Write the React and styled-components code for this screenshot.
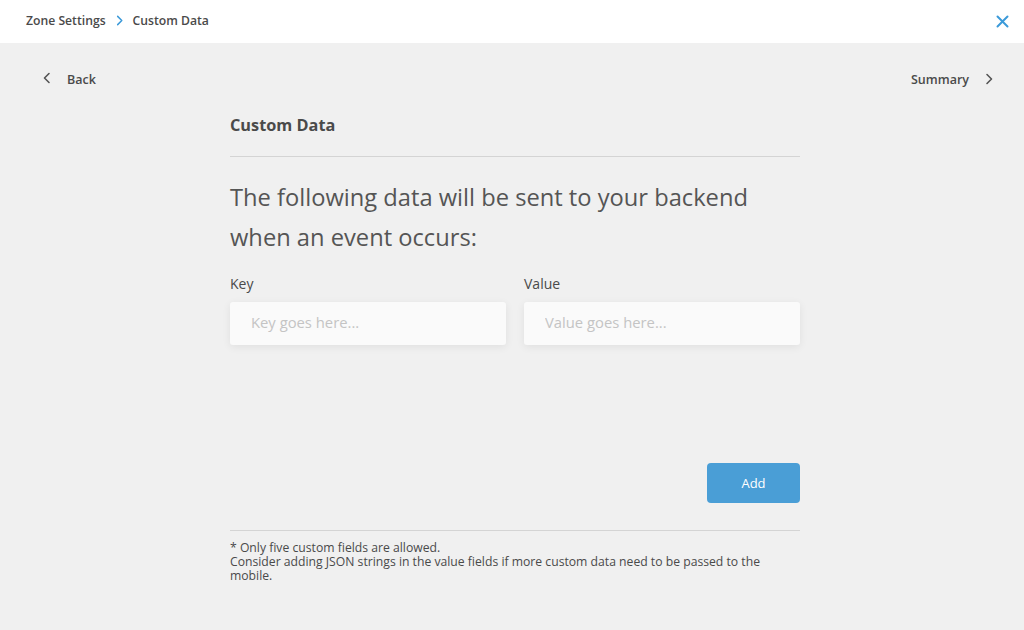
import styled, { createGlobalStyle } from "styled-components";

const GlobalStyle = createGlobalStyle`
  html, body {
    margin: 0;
    padding: 0;
    background: #f0f0f0;
    font-family: "Open Sans", "Noto Sans", sans-serif;
    color: #4a4a4a;
  }
  * { box-sizing: border-box; }
`;

const ChevronRight = ({ color = "#555", size = 12 }) => (
  <svg width={size} height={size} viewBox="0 0 12 12" fill="none">
    <path d="M4 1.5 L8.5 6 L4 10.5" stroke={color} strokeWidth="1.6" strokeLinecap="round" strokeLinejoin="round" />
  </svg>
);

const ChevronLeft = ({ color = "#555", size = 12 }) => (
  <svg width={size} height={size} viewBox="0 0 12 12" fill="none">
    <path d="M8 1.5 L3.5 6 L8 10.5" stroke={color} strokeWidth="1.6" strokeLinecap="round" strokeLinejoin="round" />
  </svg>
);

const CloseIcon = () => (
  <svg width="13" height="13" viewBox="0 0 13 13" fill="none">
    <path d="M1.5 1.5 L11.5 11.5 M11.5 1.5 L1.5 11.5" stroke="#3b9ad9" strokeWidth="2" strokeLinecap="round" />
  </svg>
);

const App = () => {
  return (
    <Page>
      <GlobalStyle />
      <Header>
        <Breadcrumb>
          <span>Zone Settings</span>
          <ChevronRight color="#3b9ad9" size={11} />
          <span>Custom Data</span>
        </Breadcrumb>
        <CloseButton type="button">
          <CloseIcon />
        </CloseButton>
      </Header>

      <NavRow>
        <NavLink>
          <ChevronLeft />
          <span>Back</span>
        </NavLink>
        <NavLink $right>
          <span>Summary</span>
          <ChevronRight />
        </NavLink>
      </NavRow>

      <Content>
        <Title>Custom Data</Title>
        <Divider />
        <Lead>The following data will be sent to your backend when an event occurs:</Lead>
        <Fields>
          <Field>
            <Label>Key</Label>
            <Input placeholder="Key goes here..." />
          </Field>
          <Field>
            <Label>Value</Label>
            <Input placeholder="Value goes here..." />
          </Field>
        </Fields>
        <Actions>
          <AddButton type="button">Add</AddButton>
        </Actions>
        <Divider $bottom />
        <Note>
          * Only five custom fields are allowed.
          <br />
          Consider adding JSON strings in the value fields if more custom data need to be passed to the mobile.
        </Note>
      </Content>
    </Page>
  );
};
export default App;

const Page = styled.div`
  min-height: 630px;
  background: #f0f0f0;
`;

const Header = styled.header`
  height: 43px;
  background: #fff;
  display: flex;
  align-items: center;
  justify-content: space-between;
  padding: 0 15px 3px 26px;
`;

const Breadcrumb = styled.div`
  display: flex;
  align-items: center;
  gap: 8px;
  font-size: 12.2px;
  font-weight: 600;
  color: #4a4a4a;
  svg {
    margin-top: 1px;
  }
`;

const CloseButton = styled.button`
  border: none;
  background: none;
  padding: 0;
  margin-top: 3px;
  display: flex;
  cursor: pointer;
`;

const NavRow = styled.div`
  display: flex;
  justify-content: space-between;
  align-items: center;
  padding: 2px 29px 0 41px;
  height: 70px;
`;

const NavLink = styled.div`
  display: flex;
  align-items: center;
  gap: 14px;
  font-size: 12.5px;
  font-weight: 600;
  color: #4a4a4a;
  cursor: pointer;
  svg {
    margin-top: ${(p) => (p.$right ? "-1px" : "-2px")};
  }
`;

const Content = styled.main`
  width: 570px;
  margin: 0 auto;
  transform: translateX(3px);
`;

const Title = styled.h2`
  margin: 0;
  font-size: 16.3px;
  font-weight: 700;
  line-height: 24px;
  color: #4a4a4a;
`;

const Divider = styled.hr`
  border: none;
  border-top: 1px solid #d4d4d4;
  margin: ${(p) => (p.$bottom ? "27px 0 10px" : "19px 0 20px")};
`;

const Lead = styled.p`
  margin: 0;
  font-size: 23.7px;
  line-height: 40px;
  font-weight: 400;
  color: #555;
  max-width: 540px;
`;

const Fields = styled.div`
  display: grid;
  grid-template-columns: 1fr 1fr;
  gap: 18px;
  margin-top: 17px;
`;

const Field = styled.div`
  display: flex;
  flex-direction: column;
  gap: 8px;
`;

const Label = styled.label`
  font-size: 14px;
  line-height: 20px;
  color: #4a4a4a;
`;

const Input = styled.input`
  height: 43px;
  border: none;
  border-radius: 3px;
  background: #fafafa;
  box-shadow: 0 2px 9px rgba(0, 0, 0, 0.07);
  padding: 0 21px 3px;
  font-family: inherit;
  font-size: 14.8px;
  color: #4a4a4a;
  outline: none;
  &::placeholder {
    color: #c4c4c4;
  }
`;

const Actions = styled.div`
  display: flex;
  justify-content: flex-end;
  margin-top: 118px;
`;

const AddButton = styled.button`
  width: 93px;
  height: 40px;
  border: none;
  border-radius: 4px;
  background: #4a9ed6;
  color: #fff;
  font-family: inherit;
  font-size: 13px;
  font-weight: 400;
  cursor: pointer;
`;

const Note = styled.p`
  margin: 0;
  max-width: 560px;
  font-size: 12.2px;
  line-height: 14px;
  color: #4a4a4a;
`;
